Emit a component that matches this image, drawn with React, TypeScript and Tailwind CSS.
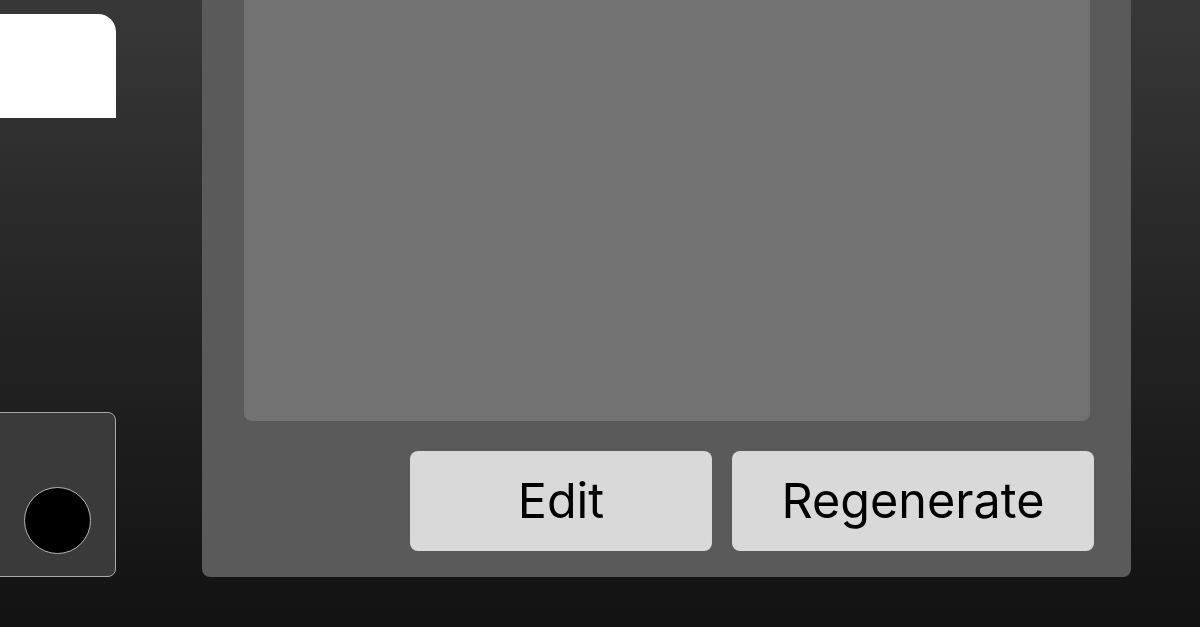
import React from "react";

export default function App() {
  return (
    <div
      className="w-[1200px] h-[627px] overflow-hidden flex items-end pb-[50px] bg-gradient-to-b from-[#383838] to-[#131213]"
      style={{ fontFamily: "Inter, 'Noto Sans', sans-serif" }}
    >
      <div className="flex flex-col justify-between h-[563px] w-[136px] ml-[-20px] shrink-0">
        <div className="h-[104px] w-full bg-white rounded-tr-[18px]" />
        <div className="h-[165px] w-full bg-[#3a3a3a] border border-[#a9a9a9] rounded-[8px] pl-[43px] pt-[74px]">
          <div className="w-[67px] h-[67px] rounded-full bg-black border border-[#b5b5b5]" />
        </div>
      </div>
      <div className="ml-[86px] w-[929px] h-[640px] shrink-0 bg-[#5a5a5a] rounded-[8px] flex flex-col pl-[42px] pr-[37px] pb-[26px]">
        <div className="flex-1 mr-[4px] bg-[#727272] rounded-[8px]" />
        <div className="mt-[30px] flex justify-end gap-[20px]">
          <button className="w-[302px] h-[100px] bg-[#d9d9d9] rounded-[8px] text-black text-[48.5px] leading-none">
            Edit
          </button>
          <button className="w-[362px] h-[100px] bg-[#d9d9d9] rounded-[8px] text-black text-[48.5px] leading-none">
            Regenerate
          </button>
        </div>
      </div>
    </div>
  );
}
